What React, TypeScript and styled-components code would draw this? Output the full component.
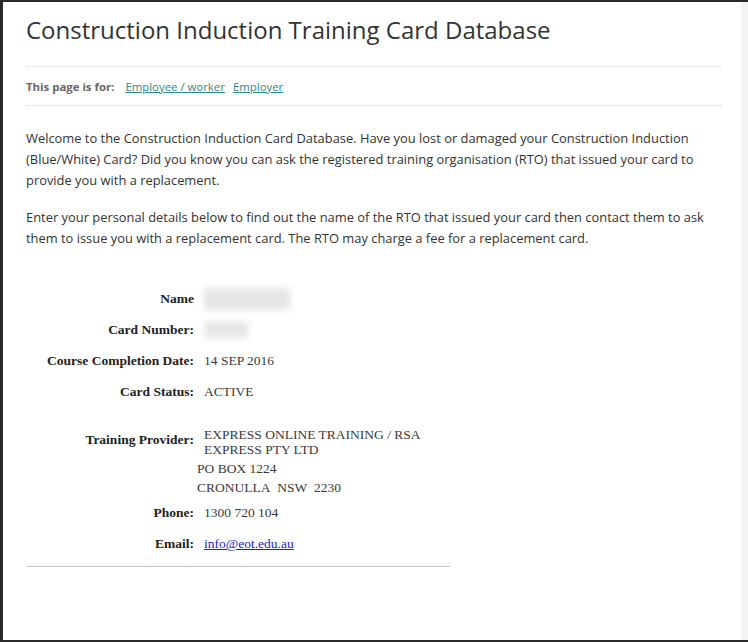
import React from "react";
import styled, { createGlobalStyle } from "styled-components";

const Global = createGlobalStyle`
  html, body { margin: 0; padding: 0; background: #ffffff; }
  body { width: 748px; height: 642px; overflow: hidden; }
`;

const Frame = styled.div`
  box-sizing: border-box;
  width: 748px;
  height: 642px;
  border-top: 2px solid #2a2a2a;
  border-left: 3px solid #2a2a2a;
  border-bottom: 2px solid #2a2a2a;
  display: flex;
  background: #ffffff;
`;

const Page = styled.main`
  flex: 1;
  padding: 0 20px 0 23px;
  font-family: "Open Sans", "Noto Sans", sans-serif;
  color: #333333;
`;

const ScrollTrack = styled.div`
  width: 7px;
  background: #f3f3f3;
`;

const Title = styled.h1`
  margin: 0;
  padding-top: 13px;
  height: 64px;
  box-sizing: border-box;
  font-size: 24px;
  font-weight: 400;
  line-height: 30px;
  color: #333333;
`;

const Divider = styled.hr`
  margin: 0;
  border: none;
  border-top: 1px dotted #d6d6d6;
`;

const AudienceBar = styled.div`
  height: 38px;
  display: flex;
  align-items: center;
  gap: 8px;
  font-size: 11.4px;
`;

const AudienceLabel = styled.span`
  font-weight: 700;
  color: #666666;
  margin-right: 3px;
`;

const AudienceLink = styled.a`
  color: #2b8a8c;
  text-decoration: underline;
`;

const Intro = styled.p<{ $first?: boolean }>`
  margin: ${(p) => (p.$first ? "22px" : "16px")} 0 0;
  font-size: 12.9px;
  line-height: 21px;
  color: #333333;
  max-width: 700px;
`;

const Details = styled.section`
  margin-top: 34px;
  width: 424px;
  font-family: "Liberation Serif", "Times New Roman", serif;
  font-size: 13.5px;
  color: #3a3a3a;
`;

const Row = styled.div<{ $h: number; $top?: number }>`
  display: grid;
  grid-template-columns: 171px 1fr;
  align-items: center;
  height: ${(p) => p.$h}px;
  margin-top: ${(p) => p.$top ?? 0}px;
`;

const Label = styled.div<{ $lift?: number }>`
  text-align: right;
  font-weight: 700;
  color: #222222;
  padding-right: 3px;
  position: relative;
  top: ${(p) => -(p.$lift ?? 0)}px;
`;

const Value = styled.div<{ $indent?: number }>`
  padding-left: ${(p) => p.$indent ?? 7}px;
  line-height: 15px;
`;

const ProviderValue = styled.div`
  padding-left: 7px;
  width: 230px;
  line-height: 15px;
`;

const Redacted = styled.span<{ $w: number; $h: number }>`
  display: block;
  width: ${(p) => p.$w}px;
  height: ${(p) => p.$h}px;
  background: #e6e6e6;
  filter: blur(3px);
`;

const MailLink = styled.a`
  color: #2222cc;
  text-decoration: underline;
`;

const Rule = styled.hr`
  margin: 7px 0 0;
  border: none;
  border-top: 1px solid #c8c8c8;
  width: 424px;
`;

export default function App() {
  return (
    <>
      <Global />
      <Frame>
        <Page>
          <Title>Construction Induction Training Card Database</Title>
          <Divider />
          <AudienceBar>
            <AudienceLabel>This page is for:</AudienceLabel>
            <AudienceLink href="#">Employee / worker</AudienceLink>
            <AudienceLink href="#">Employer</AudienceLink>
          </AudienceBar>
          <Divider />
          <Intro $first>
            Welcome to the Construction Induction Card Database. Have you lost or damaged your Construction Induction
            (Blue/White) Card? Did you know you can ask the registered training organisation (RTO) that issued your card to
            provide you with a replacement.
          </Intro>
          <Intro>
            Enter your personal details below to find out the name of the RTO that issued your card then contact them to ask
            them to issue you with a replacement card. The RTO may charge a fee for a replacement card.
          </Intro>
          <Details>
            <Row $h={31}>
              <Label>Name</Label>
              <Value>
                <Redacted $w={86} $h={22} />
              </Value>
            </Row>
            <Row $h={31}>
              <Label>Card Number:</Label>
              <Value>
                <Redacted $w={44} $h={16} />
              </Value>
            </Row>
            <Row $h={31}>
              <Label>Course Completion Date:</Label>
              <Value>14 SEP 2016</Value>
            </Row>
            <Row $h={31}>
              <Label>Card Status:</Label>
              <Value>ACTIVE</Value>
            </Row>
            <Row $h={34} $top={18}>
              <Label $lift={2}>Training Provider:</Label>
              <ProviderValue>EXPRESS ONLINE TRAINING / RSA EXPRESS PTY LTD</ProviderValue>
            </Row>
            <Row $h={19}>
              <span />
              <Value $indent={0}>PO BOX 1224</Value>
            </Row>
            <Row $h={19}>
              <span />
              <Value $indent={0}>CRONULLA&nbsp; NSW&nbsp; 2230</Value>
            </Row>
            <Row $h={31}>
              <Label>Phone:</Label>
              <Value>1300 720 104</Value>
            </Row>
            <Row $h={31}>
              <Label>Email:</Label>
              <Value>
                <MailLink href="#">info@eot.edu.au</MailLink>
              </Value>
            </Row>
            <Rule />
          </Details>
        </Page>
        <ScrollTrack />
      </Frame>
    </>
  );
}
